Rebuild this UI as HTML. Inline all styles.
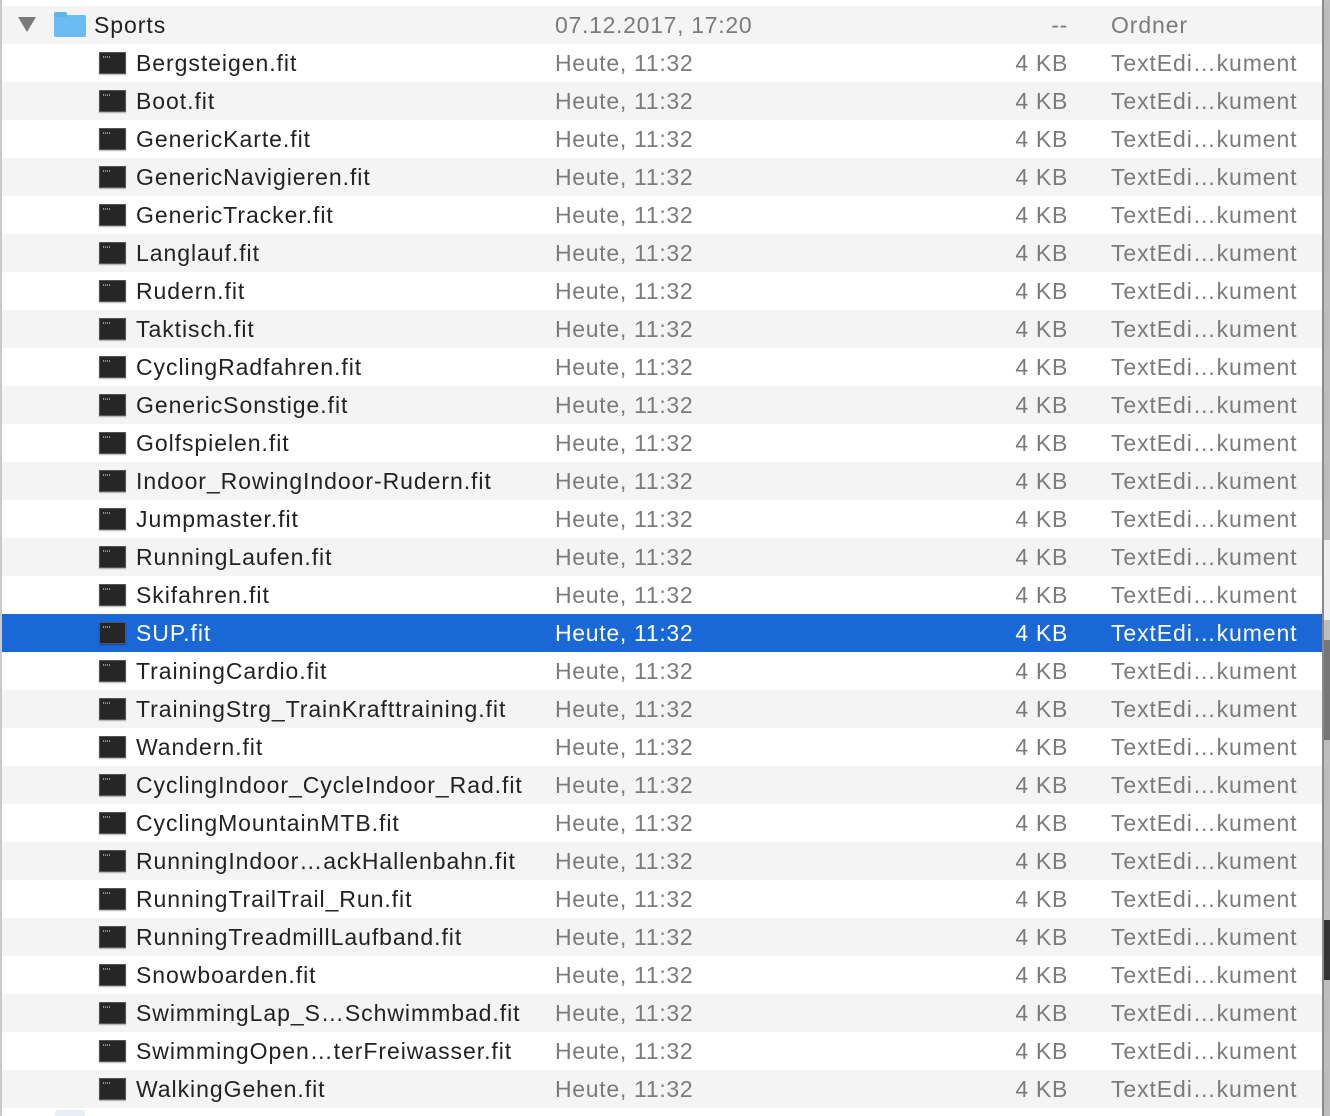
<!DOCTYPE html>
<html><head><style>
body{margin:0;width:1330px;height:1116px;overflow:hidden;background:#fff;font-family:"Liberation Sans",sans-serif;position:relative}
.side{position:absolute;left:1322px;top:0;width:8px;height:1116px;background:#bdbdbd;border-left:2px solid #8a8a8a;box-sizing:border-box}
.lb{position:absolute;left:0;top:0;width:2px;height:1116px;background:#c9c9c9}
.row{position:absolute;left:2px;width:1320px;height:38px;font-size:23px;line-height:39px;color:#222;letter-spacing:0.95px}
.row.g{background:#f4f4f4}
.row.sel{background:#1a68d6;color:#fff}
.row span{position:absolute;white-space:nowrap}
.n{left:134px}
.d{left:553px;color:#7b7b7b;letter-spacing:0.7px}
.s{right:254px;color:#7b7b7b;letter-spacing:0.7px}
.k{left:1109px;color:#7b7b7b;letter-spacing:0.9px}
.sel .d,.sel .s,.sel .k{color:#fff}
.ic{position:absolute;left:97px;top:8px;width:27px;height:22px;background:#262626;border:1px solid #555;box-sizing:border-box;box-shadow:0 1px 1px rgba(0,0,0,.3)}
.ic:after{content:"";position:absolute;left:3px;top:3px;width:8px;height:2px;background:repeating-linear-gradient(90deg,#4c4 0 1px,transparent 1px 2px)}
</style></head><body>
<div class="lb"></div>
<div class="side"><div style="position:absolute;top:540px;height:80px;width:6px;background:#eee"></div><div style="position:absolute;top:640px;height:100px;width:6px;background:#777"></div><div style="position:absolute;top:920px;height:60px;width:6px;background:#333"></div></div>
<div style="position:absolute;left:55px;top:1110px;width:30px;height:6px;background:#e8eef5;border-radius:3px 3px 0 0"></div>
<div class="row g" style="top:6px">
<span style="left:16px;top:11px;width:0;height:0;border-left:9px solid transparent;border-right:9px solid transparent;border-top:15px solid #7a7a7a"></span>
<span style="left:52px;top:9px;width:32px;height:22px;background:#6bbcf3;border-radius:2px"></span><span style="left:52px;top:6px;width:13px;height:5px;background:#5fb3ef;border-radius:2px 2px 0 0"></span>
<span style="left:92px">Sports</span><span class="d">07.12.2017, 17:20</span><span class="s">--</span><span class="k">Ordner</span></div>
<script>
var n=["Bergsteigen.fit","Boot.fit","GenericKarte.fit","GenericNavigieren.fit","GenericTracker.fit","Langlauf.fit","Rudern.fit","Taktisch.fit","CyclingRadfahren.fit","GenericSonstige.fit","Golfspielen.fit","Indoor_RowingIndoor-Rudern.fit","Jumpmaster.fit","RunningLaufen.fit","Skifahren.fit","SUP.fit","TrainingCardio.fit","TrainingStrg_TrainKrafttraining.fit","Wandern.fit","CyclingIndoor_CycleIndoor_Rad.fit","CyclingMountainMTB.fit","RunningIndoor…ackHallenbahn.fit","RunningTrailTrail_Run.fit","RunningTreadmillLaufband.fit","Snowboarden.fit","SwimmingLap_S…Schwimmbad.fit","SwimmingOpen…terFreiwasser.fit","WalkingGehen.fit"];
var h="";n.forEach(function(x,i){var j=i+1;var c=j==16?"sel":(j%2==0?"g":"");h+='<div class="row '+c+'" style="top:'+(6+38*j)+'px"><div class="ic"></div><span class="n">'+x+'</span><span class="d">Heute, 11:32</span><span class="s">4 KB</span><span class="k">TextEdi…kument</span></div>';});document.write(h);
</script>
</body></html>
